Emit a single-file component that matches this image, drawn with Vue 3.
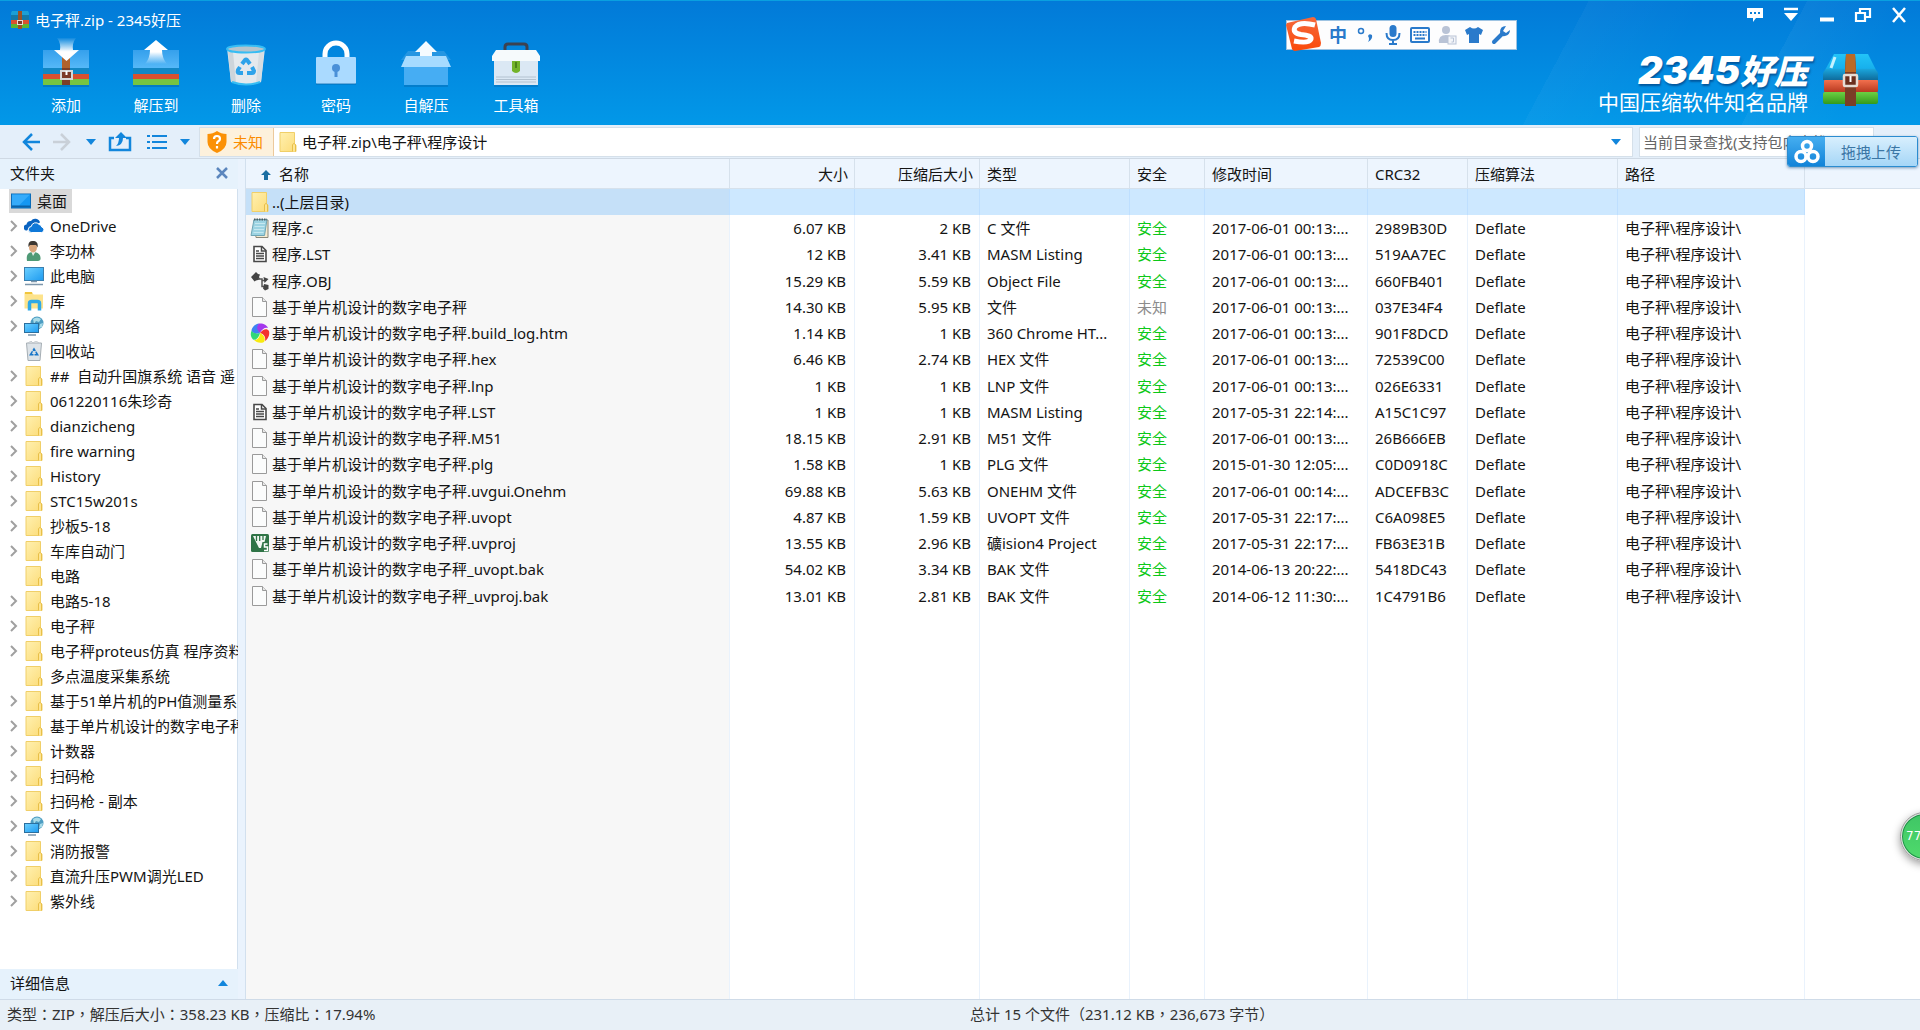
<template>
  <div class="app">
    <svg class="sprite" width="0" height="0" aria-hidden="true">
      <defs>
        <linearGradient id="g-folder" x1="0" y1="0" x2="1" y2="1">
          <stop offset="0" stop-color="#fff0b0" />
          <stop offset="1" stop-color="#fcdc78" />
        </linearGradient>
        <linearGradient id="g-screen" x1="0" y1="0" x2="1" y2="1">
          <stop offset="0" stop-color="#6cd0ff" />
          <stop offset="1" stop-color="#1e9bf0" />
        </linearGradient>
        <linearGradient id="g-lid" x1="0" y1="0" x2="0" y2="1">
          <stop offset="0" stop-color="#35a0ec" />
          <stop offset="1" stop-color="#55b8f8" />
        </linearGradient>
        <linearGradient id="g-down" x1="0" y1="0" x2="0" y2="1">
          <stop offset="0" stop-color="#fff" stop-opacity="0.05" />
          <stop offset="0.6" stop-color="#fff" />
        </linearGradient>
        <linearGradient id="g-up" x1="0" y1="1" x2="0" y2="0">
          <stop offset="0" stop-color="#fff" stop-opacity="0" />
          <stop offset="0.5" stop-color="#fff" />
        </linearGradient>
        <linearGradient id="g-blue" x1="0" y1="0" x2="0" y2="1">
          <stop offset="0" stop-color="#22c4f8" />
          <stop offset="0.55" stop-color="#17b0ec" />
          <stop offset="0.6" stop-color="#1aa2d8" />
          <stop offset="1" stop-color="#0f6c9c" />
        </linearGradient>
        <linearGradient id="g-red" x1="0" y1="0" x2="0" y2="1">
          <stop offset="0" stop-color="#f2704e" />
          <stop offset="1" stop-color="#b83a20" />
        </linearGradient>
        <linearGradient id="g-green" x1="0" y1="0" x2="0" y2="1">
          <stop offset="0" stop-color="#6cd043" />
          <stop offset="1" stop-color="#339a1c" />
        </linearGradient>
        <linearGradient id="g-sogou" x1="0" y1="0" x2="0" y2="1">
          <stop offset="0" stop-color="#f4693c" />
          <stop offset="1" stop-color="#fb4a0a" />
        </linearGradient>
      </defs>

      <symbol id="ic-folder" viewBox="0 0 20 20">
        <path d="M2 .5h14.500v11l1.500 2v6H2z" fill="url(#g-folder)" stroke="#f0cf68" />
        <path d="M14.500 19.500v-6.500l1-1.500h1l1 1.500v6.500" fill="#fde595" stroke="#e8bf48" />
      </symbol>
      <symbol id="ic-desktop" viewBox="0 0 20 20">
        <rect x=".5" y="3" width="19" height="14" fill="#1597f2" stroke="#0c6cb8" />
        <path d="M1 3.500h18L8 14.500H1z" fill="#35abfa" />
        <rect x="1" y="14.500" width="18" height="2" fill="#0b62a8" />
      </symbol>
      <symbol id="ic-onedrive" viewBox="0 0 20 20">
        <path d="M3 14.500a3 3 0 0 1-.5-6 4 4 0 0 1 4.500-3.500 5 5 0 0 1 9 1.500l-9 4z" fill="#0a63c0" />
        <path d="M7.500 16.500a3 3 0 0 1-.3-6 4.500 4.500 0 0 1 8-2 3 3 0 0 1 2.500 2.500 2.800 2.800 0 0 1 0 5.500z" fill="#0f78d8" stroke="#fff" />
      </symbol>
      <symbol id="ic-user" viewBox="0 0 20 20">
        <path d="M3 20c-1-6 1-9 6-9s8 3 7.500 7q-.2 2-4 2z" fill="#4f9a76" />
        <path d="M7 10l2 5 3-5z" fill="#e8efe9" />
        <ellipse cx="9" cy="6.500" rx="4" ry="5" fill="#d9a67c" />
        <path d="M4.500 6C4 1 6 0 9 0s5.500 1.500 4.600 6.500L12 4H6z" fill="#3d3832" />
      </symbol>
      <symbol id="ic-pc" viewBox="0 0 20 20">
        <rect x=".5" y="1.500" width="19" height="13" fill="url(#g-screen)" stroke="#3b7fae" />
        <path d="M7 15.500h6M1 18.500h18" stroke="#7d96ab" stroke-width="1.500" />
      </symbol>
      <symbol id="ic-lib" viewBox="0 0 20 20">
        <path d="M.5 1.500h8l1 2h9.500v14H.5z" fill="#fde38c" />
        <path d="M1 2h7" stroke="#f0c53c" stroke-width="2" />
        <path d="M5.500 19.500v-7q0-2 2-2h6q2 0 2 2v7" fill="none" stroke="#2fa9e8" stroke-width="3.500" />
      </symbol>
      <symbol id="ic-net" viewBox="0 0 20 20">
        <circle cx="13" cy="7" r="6.500" fill="#4c9cc2" />
        <path d="M9 3q4-3 8 0l-2 3-3-1-2 3zM16 8l3-1-1 4-3 1z" fill="#a8dbe8" />
        <rect x=".5" y="7.500" width="14" height="9" fill="url(#g-screen)" stroke="#2b6f9e" />
        <path d="M4 19h8" stroke="#7d96ab" stroke-width="1.500" />
      </symbol>
      <symbol id="ic-bin" viewBox="0 0 20 20">
        <path d="M2.500 2h15l-1.500 17.500H4z" fill="#dde3e8" stroke="#a5adb3" />
        <path d="M4 2l3-2 2 2 3-2 3 2" fill="none" stroke="#c2c8cd" />
        <path d="M10 6.500l-5 8h10z" fill="#1976c8" />
        <path d="M10 10l-1.500 2.500h3zM7 9l2 1M13 9.500l-2 1M10 13v2" fill="#dde3e8" stroke="#dde3e8" />
      </symbol>
      <symbol id="ic-file" viewBox="0 0 20 20">
        <path d="M2.500.5h10l4 4v15h-14z" fill="#fbfcfc" stroke="#9a9a9a" />
        <path d="M12.500.5v4h4" fill="#e8e8e8" stroke="#9a9a9a" />
      </symbol>
      <symbol id="ic-note" viewBox="0 0 20 20">
        <path d="M4 2h14v17.500H6z" fill="#f5ead0" stroke="#8a8778" />
        <path d="M4 1.500h13l-2.500 16H1z" fill="#9cd3e2" stroke="#6fa5b4" />
        <path d="M5 5.500h10M4.500 8.500h10M4 11.500h10M3.500 14.500h10" stroke="#c5e8f0" />
        <path d="M4 1.500h13" stroke="#4b5a60" stroke-width="2" stroke-dasharray="1.500 1" />
      </symbol>
      <symbol id="ic-lst" viewBox="0 0 20 20">
        <path d="M4 2.500h8l4 4v11H4z" fill="#fff" stroke="#484848" stroke-width="1.600" />
        <path d="M11.500 2.500v4.500H16" fill="none" stroke="#484848" stroke-width="1.500" />
        <path d="M6 7h3M6 9.500h8M6 12h8M6 14.500h8" stroke="#484848" stroke-width="1.400" />
      </symbol>
      <symbol id="ic-obj" viewBox="0 0 20 20">
        <path d="M1 6l5-5 2 2 2 .5-1 2.500 1 2-2 1-2 .5-1.500 1z" fill="#444" />
        <path d="M8 8h4v7.500h3M12 9.500h3" fill="none" stroke="#555" stroke-width="1.500" />
        <path d="M13.500 6l5 2-4 4zM14 13l4.500 1v4l-3.500 1.500-2-2z" fill="#444" />
      </symbol>
      <symbol id="ic-htm" viewBox="0 0 20 20">
        <g transform="translate(10 10)">
          <path d="M0 0C-4-2-5-7-1-9.500 3-10 7-8 8-5 5-6 2-4 0 0z" fill="#a437ec" />
          <path d="M0 0C3-4 7-5 9-2 10 2 8 6 5 8 6 4 4 1 0 0z" fill="#f4332d" />
          <path d="M0 0C4 2 6 6 4 9 0 11-4 9-6 7-2 7 0 4 0 0z" fill="#f8ea10" />
          <path d="M0 0C-1 4-4 8-7 6.500-9.500 4-10 0-8-3-7 0-4 1 0 0z" fill="#32d878" />
          <path d="M0 0C-4 1-8 0-8.500-3-7-7-4-9.500-1-9.500-4-6-3-3 0 0z" fill="#3d82f2" />
        </g>
      </symbol>
      <symbol id="ic-uv" viewBox="0 0 20 20">
        <rect x="1" y="1" width="18" height="18" rx="1.500" fill="#2f7446" />
        <path d="M3 3h13l-1.500 6h-2L11 15H9z" fill="#f2f8f3" />
        <path d="M6.500 3v5M9.700 3v5M13 3v4" stroke="#2f7446" stroke-width="1.300" />
        <path d="M17.500 11h-3v3h3v3.500h-3.500" fill="none" stroke="#fff" stroke-width="1.500" />
      </symbol>

      <symbol id="tb-add" viewBox="0 0 52 50">
        <rect x="3" y="47" width="46" height="2" fill="#0466ac" opacity=".5" />
        <rect x="3" y="12" width="46" height="18" fill="url(#g-lid)" />
        <rect x="3" y="30" width="46" height="6" fill="#1287c4" />
        <rect x="3" y="36" width="46" height="5" fill="#d9502f" />
        <rect x="3" y="41" width="46" height="6" fill="#76c442" />
        <path d="M22 18h8v29h-8z" fill="#7d3f27" />
        <path d="M22 18h8v12h-8z" fill="#b0622c" />
        <rect x="21" y="33" width="11" height="8" fill="#7c3a28" stroke="#d8d8d8" stroke-width="2" />
        <path d="M26.500 33v4" stroke="#fff" stroke-width="2" />
        <path d="M17 0h19q-4 5-3 12h6L26.500 23 14 12h6q1-7-3-12z" fill="url(#g-down)" />
      </symbol>
      <symbol id="tb-extract" viewBox="0 0 52 50">
        <rect x="3" y="47" width="46" height="2" fill="#0466ac" opacity=".5" />
        <rect x="3" y="12" width="46" height="18" fill="url(#g-lid)" />
        <rect x="3" y="30" width="46" height="6" fill="#1287c4" />
        <rect x="3" y="36" width="46" height="5" fill="#d9502f" />
        <rect x="3" y="41" width="46" height="6" fill="#76c442" />
        <path d="M26 2l12 10h-6q0 8 5 14H15q5-6 5-14h-6z" fill="url(#g-up)" />
      </symbol>
      <symbol id="tb-delete" viewBox="0 0 52 50">
        <path d="M7 10h38l-4 34q-15 6-30 0z" fill="#e4e9ed" />
        <path d="M8 14h5l3 31-5-1z" fill="#cdd5db" />
        <path d="M44 14h-5l-3 31 5-1z" fill="#d6dde2" />
        <ellipse cx="26" cy="11" rx="19" ry="3.500" fill="#b7c4cc" stroke="#36bdf4" stroke-width="2" />
        <path d="M12 44q14 5 28 0" fill="none" stroke="#36bdf4" stroke-width="2" />
        <g fill="none" stroke="#2ea3ea" stroke-width="4">
          <path d="M22 26l3-4q1-1 2 0l3 4" />
          <path d="M32 29l2 4q0 2-2 2h-5" />
          <path d="M23 35h-4q-2 0-1-3l2-3" />
        </g>
      </symbol>
      <symbol id="tb-lock" viewBox="0 0 52 50">
        <path d="M15 22V16a11 11 0 0 1 22 0v6" fill="none" stroke="#fff" stroke-width="5" />
        <rect x="6" y="19" width="40" height="27" rx="1" fill="#aadaff" />
        <path d="M6 46h40" stroke="#0466ac" stroke-width="2" opacity=".4" />
        <circle cx="26" cy="30" r="4" fill="#4a90d8" />
        <path d="M24.500 31h3v8h-3z" fill="#4a90d8" />
      </symbol>
      <symbol id="tb-sfx" viewBox="0 0 52 50">
        <path d="M8 13h36l7 9H1z" fill="#2596e2" />
        <rect x="4" y="28" width="44" height="19" fill="#46adf3" />
        <path d="M6 18h40l5 11H1z" fill="#a6dbff" />
        <path d="M4 48h44" stroke="#0466ac" stroke-width="2" opacity=".4" />
        <path d="M26 3l11 11h-5v4H20v-4h-5z" fill="#f4fbff" />
      </symbol>
      <symbol id="tb-box" viewBox="0 0 52 50">
        <path d="M15 13V9q0-3 3-3h16q3 0 3 3v4" fill="none" stroke="#3c4250" stroke-width="3" />
        <path d="M4 22h44v25H4z" fill="#dbe8f4" />
        <path d="M6 12h40l4 6v5H2v-5z" fill="#f6fafc" />
        <path d="M22 23h8v10q-4 4-8 0z" fill="#72b32a" />
        <path d="M26 24v6" stroke="#4b8318" stroke-width="2" />
        <path d="M6 39h40M6 41.500h40M6 44h40" stroke="#b3c2d0" />
        <path d="M4 48h44" stroke="#0466ac" stroke-width="2" opacity=".4" />
      </symbol>
      <symbol id="ic-archive" viewBox="0 0 58 54">
        <path d="M12 0h34l8 16q2 2 2 4v6H1v-6q0-2 2-4z" fill="url(#g-blue)" />
        <path d="M13 3l-4 11" stroke="#c5f2ff" stroke-width="3" />
        <rect x="2" y="26" width="54" height="12" rx="1" fill="url(#g-red)" />
        <rect x="1" y="38" width="55" height="12" rx="2" fill="url(#g-green)" />
        <path d="M24 0h9l1 15v37H23V15z" fill="#7b3d26" />
        <path d="M24 0h9l1 18H23z" fill="#bb6a26" />
        <rect x="22" y="21" width="13" height="11" rx="1" fill="#6b2f1e" stroke="#e6dcd4" stroke-width="2.500" />
        <path d="M28.500 22v6" stroke="#fff" stroke-width="2" />
      </symbol>
      <symbol id="ic-app" viewBox="0 0 20 18">
        <path d="M2 0h16l1 2v8H1V2z" fill="#1b9fd6" />
        <path d="M1 4h18v6H1z" fill="#1479a8" />
        <path d="M1 9h18v4H1z" fill="#d9502f" />
        <path d="M1 13h18v4H1z" fill="#5cb531" />
        <path d="M8 0h4v18H8z" fill="#9a5226" />
        <rect x="7.500" y="9.500" width="5" height="4" fill="#7c3a28" stroke="#e6dcd4" />
      </symbol>
    </svg>

    <header class="top">
      <div class="titlebar">
        <svg class="app-icon"><use href="#ic-app" /></svg>
        <h1>电子秤.zip - 2345好压</h1>
        <div class="win-buttons">
          <button type="button" aria-label="反馈">
            <svg viewBox="0 0 18 18"><path d="M1 2h16v10h-7l-3 4v-4H1z" fill="#fff" /><path d="M4 7h2M8 7h2M12 7h2" stroke="#0b7fd8" stroke-width="2" /></svg>
          </button>
          <button type="button" aria-label="菜单">
            <svg viewBox="0 0 18 18"><path d="M2 3h14" stroke="#fff" stroke-width="2.500" /><path d="M2 7h14l-7 8z" fill="#fff" /></svg>
          </button>
          <button type="button" aria-label="最小化">
            <svg viewBox="0 0 18 18"><path d="M2 13.500h14" stroke="#fff" stroke-width="4" /></svg>
          </button>
          <button type="button" aria-label="还原">
            <svg viewBox="0 0 18 18"><path d="M6 6V3h10v8h-4M2 7h9v8H2z" fill="none" stroke="#fff" stroke-width="2.200" /></svg>
          </button>
          <button type="button" aria-label="关闭">
            <svg viewBox="0 0 18 18"><path d="M3 2l12 14M15 2L3 16" stroke="#fff" stroke-width="2.500" /></svg>
          </button>
        </div>
      </div>

      <div class="banner">
        <nav class="toolbar">
          <button v-for="tool in tools" :key="tool.icon" type="button">
            <svg><use :href="`#tb-${tool.icon}`" /></svg>
            <span>{{ tool.label }}</span>
          </button>
        </nav>
        <div class="brand">
          <div class="brand-text">
            <strong>2345<em>好压</em></strong>
            <span>中国压缩软件知名品牌</span>
          </div>
          <svg><use href="#ic-archive" /></svg>
        </div>
      </div>
    </header>

    <div class="addressbar">
      <div class="nav-buttons">
        <button class="w-back" type="button" aria-label="后退">
          <svg viewBox="0 0 20 20"><path d="M11 2l-8 8 8 8M3 10h16" fill="none" stroke="#1286dc" stroke-width="2.500" /></svg>
        </button>
        <button class="w-forward" type="button" aria-label="前进">
          <svg viewBox="0 0 20 20"><path d="M9 2l8 8-8 8M17 10H1" fill="none" stroke="#c9d0d8" stroke-width="2.500" /></svg>
        </button>
        <button class="w-caret" type="button" aria-label="历史"><i class="caret"></i></button>
        <button class="w-up" type="button" aria-label="向上">
          <svg viewBox="0 0 24 20"><path d="M6 6H2v12h20V6h-4" fill="none" stroke="#1286dc" stroke-width="2.500" /><path d="M13 0l6 6h-4q0 7-7 8 3-3 3-8H7z" fill="#1286dc" /></svg>
        </button>
        <button class="w-list" type="button" aria-label="视图">
          <svg viewBox="0 0 20 20"><path d="M0 4h3M0 10h3M0 16h3M5 4h15M5 10h15M5 16h15" stroke="#1286dc" stroke-width="2.200" /></svg>
        </button>
        <button class="w-caret" type="button" aria-label="视图选项"><i class="caret"></i></button>
      </div>
      <div class="address">
        <button class="badge" type="button">
          <svg viewBox="0 0 20 22"><path d="M10 0q4 3 9.500 3v8q0 7-9.500 11Q.5 18 .5 11V3Q6 3 10 0z" fill="#fb9106" /><path d="M7 8q0-3 3-3t3 3q0 1.500-2 2.500-1 .6-1 2.500M10 15v2.500" fill="none" stroke="#fff" stroke-width="2.200" /></svg>
          未知
        </button>
        <svg class="path-icon"><use href="#ic-folder" /></svg>
        <input v-model="path" type="text" aria-label="地址" />
        <button class="w-drop" type="button" aria-label="展开地址"><i class="caret"></i></button>
      </div>
      <div class="search">
        <input type="text" placeholder="当前目录查找(支持包内查找)" aria-label="查找" />
      </div>
    </div>

    <div class="body">
      <aside class="sidebar">
        <div class="panel-head">
          <h2>文件夹</h2>
          <button type="button" aria-label="关闭面板">
            <svg viewBox="0 0 12 12"><path d="M1 1l10 10M11 1L1 11" stroke="#5b86bd" stroke-width="2.500" /></svg>
          </button>
        </div>
        <ul class="tree">
          <li v-for="node in tree" :key="node.name" :class="{ root: node.root }">
            <svg v-if="!node.root" class="chevron" viewBox="0 0 8 12">
              <path v-if="!node.leaf" d="M1 1l5 5-5 5" fill="none" stroke="#a0a0a0" stroke-width="2" />
            </svg>
            <button type="button">
              <svg><use :href="`#ic-${node.icon || 'folder'}`" /></svg>
              <span>{{ node.name }}</span>
            </button>
          </li>
        </ul>
        <div class="panel-head">
          <h2>详细信息</h2>
          <button type="button" aria-label="展开详细信息"><i class="caret up"></i></button>
        </div>
      </aside>

      <main class="files">
        <table>
          <colgroup>
            <col v-for="col in columns" :key="col.key" :class="`col-${col.key}`" />
            <col />
          </colgroup>
          <thead>
            <tr>
              <th v-for="col in columns" :key="col.key" :class="{ num: col.num }" scope="col">
                <svg v-if="col.key === 'name'" class="sort" viewBox="0 0 10 10"><path d="M5 0l5 5H7v5H3V5H0z" fill="#1b6fa3" /></svg>
                {{ col.label }}
              </th>
              <th></th>
            </tr>
          </thead>
          <tbody>
            <tr class="selected">
              <td><div class="name"><svg><use href="#ic-folder" /></svg>..(上层目录)</div></td>
              <td v-for="n in 8" :key="n"></td>
              <td></td>
            </tr>
            <tr v-for="file in files" :key="file.name">
              <td><div class="name"><svg><use :href="`#ic-${file.icon}`" /></svg>{{ file.name }}</div></td>
              <td class="num">{{ file.size }}</td>
              <td class="num">{{ file.packed }}</td>
              <td>{{ file.type }}</td>
              <td :class="file.safe === '安全' ? 'safe' : 'unknown'">{{ file.safe }}</td>
              <td>{{ file.time }}</td>
              <td>{{ file.crc }}</td>
              <td>Deflate</td>
              <td>电子秤\程序设计\</td>
              <td></td>
            </tr>
            <tr class="filler">
              <td v-for="n in 10" :key="n"></td>
            </tr>
          </tbody>
        </table>
      </main>
    </div>

    <footer class="status">
      <span>类型：ZIP，解压后大小：358.23 KB，压缩比：17.94%</span>
      <span>总计 15 个文件（231.12 KB，236,673 字节）</span>
    </footer>

    <!-- floating widgets -->
    <div class="ime">
      <svg class="ime-logo" viewBox="0 0 36 36"><path d="M1 7L27 1q2 0 3 2l5 24q0 3-2 4L9 35q-2 0-3-2L0 9z" fill="url(#g-sogou)" /><path d="M29 9Q14 5 9 11q-3 6 6 7.500 11 1 10 4.500-2 5-17 2" fill="none" stroke="#fff" stroke-width="5" /></svg>
      <b>中</b>
      <svg viewBox="0 0 20 20"><circle cx="5" cy="6" r="2.500" fill="none" stroke="#2a7acb" stroke-width="1.500" /><path d="M12 11q1-3 4-1 1 4-4 7 2-3 0-6z" fill="#2a7acb" /></svg>
      <svg viewBox="0 0 20 20"><rect x="6.500" y="0" width="7" height="12" rx="3.500" fill="#2a7acb" /><path d="M3.500 8q0 7 6.500 7t6.500-7M10 15v4M6 19h8" fill="none" stroke="#2a7acb" stroke-width="2" /></svg>
      <svg viewBox="0 0 20 20"><rect x="1" y="3" width="18" height="14" rx="1" fill="none" stroke="#2a7acb" stroke-width="2" /><path d="M3.500 7h13M3.500 10h13" stroke="#2a7acb" stroke-width="2" stroke-dasharray="2 1" /><path d="M5 13.500h10" stroke="#2a7acb" stroke-width="2" /></svg>
      <svg viewBox="0 0 20 20"><circle cx="9" cy="5" r="4" fill="#b9c3d6" /><path d="M2 18q-1-8 7-8 5 0 6 3v5z" fill="#b9c3d6" /><rect x="11" y="11" width="8" height="8" fill="#f3f5f9" stroke="#b9c3d6" /><path d="M13.500 13h3v4h-2" fill="none" stroke="#b9c3d6" /></svg>
      <svg viewBox="0 0 20 20"><path d="M6 2q4 3 8 0l5 3-2 5-2-1v9H5V9l-2 1-2-5z" fill="#2a7acb" /></svg>
      <svg viewBox="0 0 20 20"><path d="M3 17l8-8" stroke="#2a7acb" stroke-width="4" stroke-linecap="round" /><path d="M15 1q-6 0-6 6 1 5 5 4 5-1 5-6l-4 3-3-2z" fill="#2a7acb" /></svg>
    </div>

    <button class="upload" type="button">
      <span class="upload-icon">
        <svg viewBox="0 0 26 26"><g fill="none" stroke="#fff" stroke-width="3.500"><circle cx="13" cy="7" r="4.500" /><circle cx="7" cy="17.500" r="5" /><circle cx="19" cy="17.500" r="5" /></g></svg>
      </span>
      <span class="upload-label">拖拽上传</span>
    </button>

    <div class="ball">77</div>
  </div>
</template>

<script setup>
import { ref } from 'vue'

const path = ref('电子秤.zip\\电子秤\\程序设计')

const tools = [
  { icon: 'add', label: '添加' },
  { icon: 'extract', label: '解压到' },
  { icon: 'delete', label: '删除' },
  { icon: 'lock', label: '密码' },
  { icon: 'sfx', label: '自解压' },
  { icon: 'box', label: '工具箱' },
]

const tree = [
  { name: '桌面', icon: 'desktop', root: true },
  { name: 'OneDrive', icon: 'onedrive' },
  { name: '李功林', icon: 'user' },
  { name: '此电脑', icon: 'pc' },
  { name: '库', icon: 'lib' },
  { name: '网络', icon: 'net' },
  { name: '回收站', icon: 'bin', leaf: true },
  { name: '##  自动升国旗系统 语音 遥' },
  { name: '061220116朱珍奇' },
  { name: 'dianzicheng' },
  { name: 'fire warning' },
  { name: 'History' },
  { name: 'STC15w201s' },
  { name: '抄板5-18' },
  { name: '车库自动门' },
  { name: '电路', leaf: true },
  { name: '电路5-18' },
  { name: '电子秤' },
  { name: '电子秤proteus仿真 程序资料' },
  { name: '多点温度采集系统', leaf: true },
  { name: '基于51单片机的PH值测量系' },
  { name: '基于单片机设计的数字电子秤' },
  { name: '计数器' },
  { name: '扫码枪' },
  { name: '扫码枪 - 副本' },
  { name: '文件', icon: 'net' },
  { name: '消防报警' },
  { name: '直流升压PWM调光LED' },
  { name: '紫外线' },
]

const columns = [
  { key: 'name', label: '名称' },
  { key: 'size', label: '大小', num: true },
  { key: 'packed', label: '压缩后大小', num: true },
  { key: 'type', label: '类型' },
  { key: 'safe', label: '安全' },
  { key: 'time', label: '修改时间' },
  { key: 'crc', label: 'CRC32' },
  { key: 'method', label: '压缩算法' },
  { key: 'path', label: '路径' },
]

const base = '基于单片机设计的数字电子秤'

const rows = [
  ['note', '程序.c', '6.07 KB', '2 KB', 'C 文件', '安全', '2017-06-01 00:13:...', '2989B30D'],
  ['lst', '程序.LST', '12 KB', '3.41 KB', 'MASM Listing', '安全', '2017-06-01 00:13:...', '519AA7EC'],
  ['obj', '程序.OBJ', '15.29 KB', '5.59 KB', 'Object File', '安全', '2017-06-01 00:13:...', '660FB401'],
  ['file', base, '14.30 KB', '5.95 KB', '文件', '未知', '2017-06-01 00:13:...', '037E34F4'],
  ['htm', base + '.build_log.htm', '1.14 KB', '1 KB', '360 Chrome HT...', '安全', '2017-06-01 00:13:...', '901F8DCD'],
  ['file', base + '.hex', '6.46 KB', '2.74 KB', 'HEX 文件', '安全', '2017-06-01 00:13:...', '72539C00'],
  ['file', base + '.lnp', '1 KB', '1 KB', 'LNP 文件', '安全', '2017-06-01 00:13:...', '026E6331'],
  ['lst', base + '.LST', '1 KB', '1 KB', 'MASM Listing', '安全', '2017-05-31 22:14:...', 'A15C1C97'],
  ['file', base + '.M51', '18.15 KB', '2.91 KB', 'M51 文件', '安全', '2017-06-01 00:13:...', '26B666EB'],
  ['file', base + '.plg', '1.58 KB', '1 KB', 'PLG 文件', '安全', '2015-01-30 12:05:...', 'C0D0918C'],
  ['file', base + '.uvgui.Onehm', '69.88 KB', '5.63 KB', 'ONEHM 文件', '安全', '2017-06-01 00:14:...', 'ADCEFB3C'],
  ['file', base + '.uvopt', '4.87 KB', '1.59 KB', 'UVOPT 文件', '安全', '2017-05-31 22:17:...', 'C6A098E5'],
  ['uv', base + '.uvproj', '13.55 KB', '2.96 KB', '礦ision4 Project', '安全', '2017-05-31 22:17:...', 'FB63E31B'],
  ['file', base + '_uvopt.bak', '54.02 KB', '3.34 KB', 'BAK 文件', '安全', '2014-06-13 20:22:...', '5418DC43'],
  ['file', base + '_uvproj.bak', '13.01 KB', '2.81 KB', 'BAK 文件', '安全', '2014-06-12 11:30:...', '1C4791B6'],
]

const files = rows.map(([icon, name, size, packed, type, safe, time, crc]) => ({
  icon, name, size, packed, type, safe, time, crc,
}))
</script>

<style>
body {
  margin: 0;
}
</style>

<style scoped>
.app {
  position: relative;
  display: flex;
  flex-direction: column;
  height: 100vh;
  overflow: hidden;
  background: #fff;
  color: #141414;
  font-family: "Noto Sans", "Noto Sans CJK SC", sans-serif;
  font-size: 15px;
  line-height: 20px;
}

.app * {
  box-sizing: border-box;
}

.sprite {
  position: absolute;
}

button {
  padding: 0;
  border: 0;
  background: none;
  color: inherit;
  font: inherit;
  cursor: pointer;
}

input {
  min-width: 0;
  padding: 0;
  border: 0;
  outline: 0;
  background: none;
  color: inherit;
  font: inherit;
}

h1,
h2 {
  margin: 0;
  font-size: 15px;
  font-weight: 400;
}

svg {
  display: block;
  flex: none;
}

.caret {
  display: block;
  width: 0;
  border: 5px solid transparent;
  border-top: 6px solid #1286dc;
  border-bottom: 0;
}

.caret.up {
  border-top: 0;
  border-bottom: 6px solid #1286dc;
}

/* header */
.top {
  flex: none;
  display: flex;
  flex-direction: column;
  height: 125px;
  border-top: 1px solid #0aa0e0;
  background:
    linear-gradient(118deg, transparent 80%, rgba(255, 255, 255, 0.03) 80%, transparent 86%),
    linear-gradient(118deg, transparent 91%, rgba(255, 255, 255, 0.04) 91%, transparent 96%),
    linear-gradient(#027ad8, #0298e8);
  color: #fff;
}

.titlebar {
  display: flex;
  align-items: center;
  height: 37px;
  padding: 0 12px 0 10px;
}

.app-icon {
  width: 20px;
  height: 18px;
  margin-right: 5px;
}

.win-buttons {
  display: flex;
  align-self: flex-start;
  gap: 18px;
  margin: 5px 0 0 auto;
}

.win-buttons svg {
  width: 18px;
  height: 18px;
}

.banner {
  display: flex;
  justify-content: space-between;
  flex: 1;
  padding: 0 40px 0 21px;
}

.toolbar {
  display: flex;
}

.toolbar button {
  display: flex;
  flex-direction: column;
  align-items: center;
  gap: 7px;
  width: 90px;
}

.toolbar svg {
  width: 52px;
  height: 50px;
}

.brand {
  display: flex;
  gap: 14px;
  padding-top: 16px;
}

.brand svg {
  width: 58px;
  height: 54px;
}

.brand-text {
  display: flex;
  flex-direction: column;
  align-items: flex-end;
}

.brand strong {
  font: italic 900 38px/32px Inter, "Noto Sans CJK SC", sans-serif;
  text-shadow: 1px 2px 2px rgba(0, 50, 110, 0.6);
  white-space: nowrap;
}

.brand em {
  font-size: 34px;
}

.brand-text span {
  font-size: 21px;
  line-height: 28px;
}

/* address bar */
.addressbar {
  flex: none;
  display: flex;
  align-items: flex-start;
  height: 34px;
  padding: 2px 46px 0 21px;
  border-bottom: 1px solid #cfd9e4;
  background: #e4effa;
}

.nav-buttons {
  display: flex;
  align-items: center;
  width: 178px;
  height: 30px;
}

.nav-buttons button {
  display: flex;
}

.nav-buttons svg {
  width: 20px;
  height: 20px;
}

.w-back {
  margin-right: 11px;
}

.w-forward {
  margin-right: 14px;
}

.w-caret {
  margin-right: 12px;
}

.nav-buttons .w-up svg {
  width: 24px;
}

.w-list {
  margin: 0 13px 0 15px;
}

.address,
.search {
  display: flex;
  align-items: center;
  height: 30px;
  border: 1px solid #d5e0ea;
  background: #fff;
}

.address {
  flex: 1;
}

.address input {
  flex: 1;
}

.badge {
  display: flex;
  align-items: center;
  gap: 6px;
  height: 28px;
  padding: 0 10px 0 7px;
  border-right: 1px solid #ecc99c;
  background: #fdf1dc;
  color: #fb8c00;
}

.badge svg {
  width: 20px;
  height: 22px;
}

.path-icon {
  width: 20px;
  height: 20px;
  margin: 0 4px;
}

.w-drop {
  margin-right: 11px;
}

.search {
  width: 235px;
  margin-left: 6px;
  padding: 0 3px;
}

.search input {
  width: 100%;
}

.search input::placeholder {
  color: #666;
  opacity: 1;
}

/* body */
.body {
  display: flex;
  flex: 1;
  min-height: 0;
}

.sidebar {
  flex: none;
  display: flex;
  flex-direction: column;
  width: 245px;
  border-right: 7px solid #eaf3fd;
  box-shadow: inset -1px 0 #d2e0ee;
}

.panel-head {
  flex: none;
  display: flex;
  align-items: center;
  justify-content: space-between;
  height: 30px;
  padding: 0 10px 2px;
  background: #e6f2fc;
}

.panel-head button svg {
  width: 12px;
  height: 12px;
}

.tree {
  flex: 1;
  min-height: 0;
  margin: 0;
  padding: 0;
  overflow: hidden;
  list-style: none;
}

.tree li {
  display: flex;
  align-items: center;
  height: 25px;
  padding-left: 10px;
}

.tree button {
  display: flex;
  align-items: center;
  gap: 6px;
  white-space: pre;
}

.tree button svg {
  width: 20px;
  height: 20px;
}

.chevron {
  width: 8px;
  height: 12px;
  margin-right: 6px;
}

.tree .root {
  height: 24px;
  padding-left: 9px;
}

.root button {
  height: 24px;
  padding: 0 5px 0 2px;
  background: #d9d9d9;
}

/* file table */
.files {
  flex: 1;
  min-width: 0;
  border-left: 1px solid #d2e0ee;
}

table {
  width: 100%;
  height: 100%;
  table-layout: fixed;
  border-collapse: separate;
  border-spacing: 0;
}

.col-name { width: 484px; }
.col-size { width: 125px; }
.col-packed { width: 125px; }
.col-type { width: 150px; }
.col-safe { width: 75px; }
.col-time { width: 163px; }
.col-crc { width: 100px; }
.col-method { width: 150px; }
.col-path { width: 187px; }

th,
td {
  padding: 0 8px 0 7px;
  text-align: left;
  white-space: nowrap;
  overflow: hidden;
}

th {
  height: 30px;
  padding: 0 6px 0 7px;
  border-right: 1px solid #d6e1ec;
  border-bottom: 1px solid #d6e1ec;
  background: #edf5fe;
  font-weight: 400;
}

th:first-child {
  padding-left: 15px;
}

.sort {
  display: inline-block;
  width: 10px;
  height: 10px;
  margin-right: 4px;
}

.num {
  text-align: right;
}

tbody tr {
  height: 26px;
}

tbody tr:nth-child(4n) {
  height: 27px;
}

tbody .filler {
  height: auto;
}

td {
  border-right: 1px solid #e9f2fc;
}

th:last-child,
td:last-child {
  border-right: 0;
}

td:first-child {
  padding: 0 4px;
  background: #f7f7f7;
}

.name {
  display: flex;
  align-items: center;
  gap: 2px;
}

.name svg {
  width: 20px;
  height: 20px;
}

.selected td {
  border-color: #bedfff;
  background: #cde8ff;
}

.selected td:first-child {
  background: #c5e0f8;
}

.selected td:last-child {
  background: #fff;
}

.safe {
  color: #0cc818;
}

.unknown {
  color: #8c8c8c;
}

/* status bar */
.status {
  flex: none;
  display: grid;
  grid-template-columns: 963px 1fr;
  align-items: center;
  height: 31px;
  padding: 0 0 2px 7px;
  border-top: 1px solid #cfdbe8;
  background: #e8f0f7;
  color: #333;
  font-family: "Noto Sans", "Noto Sans CJK TC", sans-serif;
}

.status span {
  white-space: nowrap;
}

/* floating widgets */
.ime {
  position: absolute;
  top: 20px;
  right: 403px;
  display: flex;
  align-items: center;
  gap: 7px;
  height: 30px;
  padding: 0 5px 0 42px;
  border: 1px solid #9ec3e2;
  background: #fdfdfe;
  color: #2a7acb;
}

.ime svg {
  width: 20px;
  height: 20px;
}

.ime b {
  width: 20px;
  font-size: 18px;
}

.ime .ime-logo {
  position: absolute;
  top: -5px;
  left: -1px;
  width: 36px;
  height: 36px;
}

.upload {
  position: absolute;
  top: 136px;
  right: 2px;
  display: flex;
  width: 131px;
  height: 31px;
  overflow: hidden;
  border: 1px solid #2b8cd0;
  border-radius: 3px;
  box-shadow: 0 1px 3px rgba(40, 90, 140, 0.6);
  color: #3b76a5;
}

.upload-icon {
  display: flex;
  align-items: center;
  justify-content: center;
  width: 37px;
  height: 100%;
  background: linear-gradient(#45aef0, #1283d8);
}

.upload-icon svg {
  width: 26px;
  height: 26px;
}

.upload-label {
  flex: 1;
  height: 100%;
  background: linear-gradient(#d8effd, #a5d6f7);
  line-height: 31px;
}

.ball {
  position: absolute;
  top: 812px;
  right: -29px;
  width: 49px;
  height: 49px;
  padding-left: 4px;
  border: 2px solid #e2e2e2;
  border-radius: 50%;
  outline: 1px solid #999;
  outline-offset: -1px;
  background: linear-gradient(#3fc565, #4fdb6c);
  box-shadow: 0 3px 8px rgba(0, 0, 0, 0.4), inset 0 0 0 1px #1f8c48;
  color: #fff;
  font: 12px/45px "DejaVu Sans", sans-serif;
}
</style>
